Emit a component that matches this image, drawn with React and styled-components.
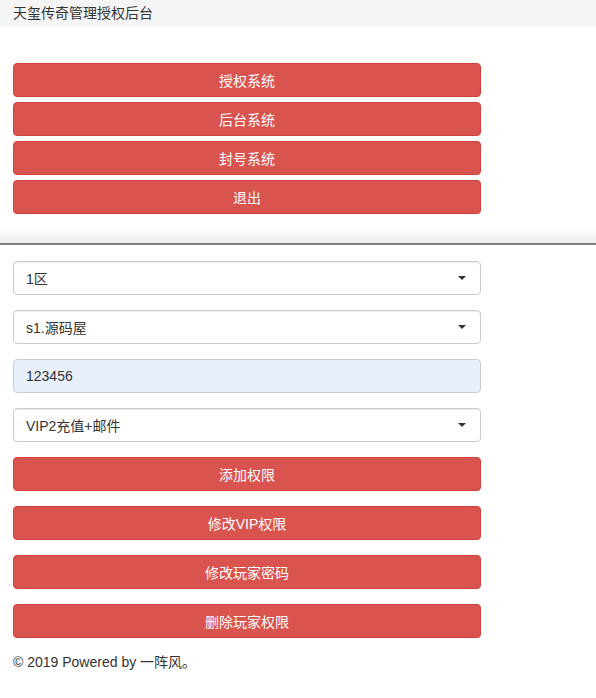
import styled, { createGlobalStyle } from 'styled-components'

const GlobalStyle = createGlobalStyle`
  body {
    margin: 0;
    background: #fff;
    font-family: "Liberation Sans", "Noto Sans CJK SC", sans-serif;
    font-size: 14px;
    color: #333;
  }
`

const menuItems = ['授权系统', '后台系统', '封号系统', '退出']
const actions = ['添加权限', '修改VIP权限', '修改玩家密码', '删除玩家权限']

function App() {
  return (
    <>
      <GlobalStyle />
      <Header>天玺传奇管理授权后台</Header>
      <Menu>
        {menuItems.map((item) => (
          <RedButton key={item}>{item}</RedButton>
        ))}
      </Menu>
      <Divider />
      <Form>
        <Select>
          <span>1区</span>
          <Caret />
        </Select>
        <Select>
          <span>s1.源码屋</span>
          <Caret />
        </Select>
        <Input defaultValue="123456" />
        <Select>
          <span>VIP2充值+邮件</span>
          <Caret />
        </Select>
        {actions.map((item) => (
          <RedButton key={item}>{item}</RedButton>
        ))}
      </Form>
      <Footer>© 2019 Powered by 一阵风。</Footer>
    </>
  )
}

const Header = styled.div`
  height: 27px;
  line-height: 27px;
  padding-left: 13px;
  background: #f5f5f5;
  color: #333;
`
const Menu = styled.div`
  margin: 36px 0 0 13px;
  width: 468px;
  display: flex;
  flex-direction: column;
  gap: 5px;
`
const RedButton = styled.button`
  height: 34px;
  width: 100%;
  box-sizing: border-box;
  background: #d9534f;
  border: 1px solid #d43f3a;
  border-radius: 4px;
  color: #fff;
  font-family: inherit;
  font-size: 14px;
  padding: 0;
`
const Divider = styled.div`
  margin-top: 14px;
  height: 15px;
  background: linear-gradient(#fff, #ececec);
  border-bottom: 2px solid #808080;
`
const Form = styled.div`
  margin: 16px 0 0 13px;
  width: 468px;
  display: flex;
  flex-direction: column;
  gap: 15px;
`
const Select = styled.div`
  height: 34px;
  box-sizing: border-box;
  border: 1px solid #ccc;
  border-radius: 4px;
  padding: 0 14px 0 12px;
  display: flex;
  align-items: center;
  justify-content: space-between;
  color: #333;
  box-shadow: inset 0 1px 1px rgba(0, 0, 0, 0.075);
`
const Caret = styled.i`
  width: 0;
  height: 0;
  border-left: 4px solid transparent;
  border-right: 4px solid transparent;
  border-top: 4px solid #333;
`
const Input = styled.input`
  height: 34px;
  box-sizing: border-box;
  border: 1px solid #ccc;
  border-radius: 4px;
  padding: 0 12px;
  background: #e8f0fe;
  font-family: inherit;
  font-size: 14px;
  color: #333;
  outline: none;
`
const Footer = styled.div`
  margin: 14px 0 0 13px;
  line-height: 20px;
  color: #333;
`

export default App
